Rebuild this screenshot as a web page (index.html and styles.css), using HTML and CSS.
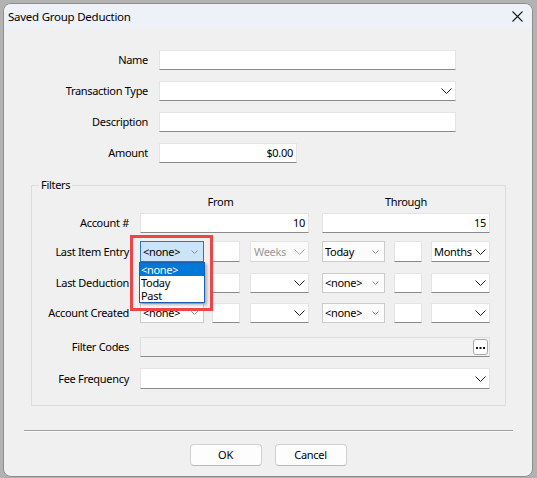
FILE: index.html
```html
<!DOCTYPE html>
<html lang="en">
<head>
<meta charset="utf-8">
<title>Saved Group Deduction</title>
<link rel="stylesheet" href="styles.css">
</head>
<body>
<div class="window">
  <div class="titlebar">
    <span class="title">Saved Group Deduction</span>
    <svg class="close" width="11" height="11" viewBox="0 0 11 11"><path d="M0.5 0.5 L10.5 10.5 M10.5 0.5 L0.5 10.5" stroke="#1a1a1a" stroke-width="1.1" fill="none"/></svg>
  </div>

  <div class="client">
    <div class="main-form">
      <label class="lbl">Name</label>
      <div class="field"></div>

      <label class="lbl">Transaction Type</label>
      <div class="field select"><span></span><svg class="chev" width="11" height="6" viewBox="0 0 11 6"><path d="M0.5 0.5 L5.5 5.5 L10.5 0.5"/></svg></div>

      <label class="lbl">Description</label>
      <div class="field"></div>

      <label class="lbl">Amount</label>
      <div class="field num amount">$0.00</div>
    </div>

    <fieldset class="filters">
      <legend>Filters</legend>

      <div class="frow head">
        <span></span>
        <span class="colhead from-head">From</span>
        <span class="colhead through">Through</span>
      </div>

      <div class="frow r-account">
        <label class="lbl">Account #</label>
        <div class="field num">10</div>
        <div class="field num through">15</div>
      </div>

      <div class="frow r-item">
        <label class="lbl">Last Item Entry</label>
        <div class="range from">
          <div class="combo-wrap">
            <div class="combo active"><span>&lt;none&gt;</span><svg class="chev-s" width="7" height="4" viewBox="0 0 7 4"><path d="M0.5 0.5 L3.5 3.5 L6.5 0.5"/></svg></div>
            <div class="dropdown">
              <div class="opt sel">&lt;none&gt;</div>
              <div class="opt">Today</div>
              <div class="opt">Past</div>
            </div>
            <div class="callout"></div>
          </div>
          <div class="field small"></div>
          <div class="field select disabled"><span>Weeks</span><svg class="chev" width="11" height="6" viewBox="0 0 11 6"><path d="M0.5 0.5 L5.5 5.5 L10.5 0.5"/></svg></div>
        </div>
        <div class="range to through">
          <div class="combo"><span>Today</span><svg class="chev-s" width="7" height="4" viewBox="0 0 7 4"><path d="M0.5 0.5 L3.5 3.5 L6.5 0.5"/></svg></div>
          <div class="field small"></div>
          <div class="field select"><span>Months</span><svg class="chev" width="11" height="6" viewBox="0 0 11 6"><path d="M0.5 0.5 L5.5 5.5 L10.5 0.5"/></svg></div>
        </div>
      </div>

      <div class="frow r-ded">
        <label class="lbl">Last Deduction</label>
        <div class="range from">
          <!-- this combo sits under the open list above -->
          <div class="combo"><span></span><svg class="chev-s" width="7" height="4" viewBox="0 0 7 4"><path d="M0.5 0.5 L3.5 3.5 L6.5 0.5"/></svg></div>
          <div class="field small"></div>
          <div class="field select"><span></span><svg class="chev" width="11" height="6" viewBox="0 0 11 6"><path d="M0.5 0.5 L5.5 5.5 L10.5 0.5"/></svg></div>
        </div>
        <div class="range to through">
          <div class="combo"><span>&lt;none&gt;</span><svg class="chev-s" width="7" height="4" viewBox="0 0 7 4"><path d="M0.5 0.5 L3.5 3.5 L6.5 0.5"/></svg></div>
          <div class="field small"></div>
          <div class="field select"><span></span><svg class="chev" width="11" height="6" viewBox="0 0 11 6"><path d="M0.5 0.5 L5.5 5.5 L10.5 0.5"/></svg></div>
        </div>
      </div>

      <div class="frow r-created">
        <label class="lbl">Account Created</label>
        <div class="range from">
          <div class="combo"><span>&lt;none&gt;</span><svg class="chev-s" width="7" height="4" viewBox="0 0 7 4"><path d="M0.5 0.5 L3.5 3.5 L6.5 0.5"/></svg></div>
          <div class="field small"></div>
          <div class="field select"><span></span><svg class="chev" width="11" height="6" viewBox="0 0 11 6"><path d="M0.5 0.5 L5.5 5.5 L10.5 0.5"/></svg></div>
        </div>
        <div class="range to through">
          <div class="combo"><span>&lt;none&gt;</span><svg class="chev-s" width="7" height="4" viewBox="0 0 7 4"><path d="M0.5 0.5 L3.5 3.5 L6.5 0.5"/></svg></div>
          <div class="field small"></div>
          <div class="field select"><span></span><svg class="chev" width="11" height="6" viewBox="0 0 11 6"><path d="M0.5 0.5 L5.5 5.5 L10.5 0.5"/></svg></div>
        </div>
      </div>

      <div class="frow r-codes">
        <label class="lbl">Filter Codes</label>
        <div class="picker">
          <div class="ellipsis"><svg width="9" height="2" viewBox="0 0 9 2"><rect x="0" y="0" width="2" height="2"/><rect x="3.5" y="0" width="2" height="2"/><rect x="7" y="0" width="2" height="2"/></svg></div>
        </div>
      </div>

      <div class="frow r-fee">
        <label class="lbl">Fee Frequency</label>
        <div class="field select span"><span></span><svg class="chev" width="11" height="6" viewBox="0 0 11 6"><path d="M0.5 0.5 L5.5 5.5 L10.5 0.5"/></svg></div>
      </div>
    </fieldset>

    <div class="separator"></div>

    <div class="buttons">
      <button class="btn">OK</button>
      <button class="btn">Cancel</button>
    </div>
  </div>
</div>
</body>
</html>
```

FILE: styles.css
```css
* {
  box-sizing: border-box;
}

html,
body {
  margin: 0;
}

body {
  width: 537px;
  height: 478px;
  overflow: hidden;
  background: #b2b2b2;
  font-family: "Noto Sans", "Open Sans", sans-serif;
  font-size: 11px;
  letter-spacing: -0.3px;
  color: #000;
}

/* dialog frame */
.window {
  margin: 3px 0 0 3px;
  width: 530px;
  height: 474px;
  border: 1px solid #8e8e8e;
  border-radius: 8px;
  overflow: hidden;
  background: #f0f0f0;
  display: flex;
  flex-direction: column;
}

.titlebar {
  flex: none;
  height: 24px;
  background: #eef2f8;
  display: flex;
  align-items: center;
  justify-content: space-between;
  padding: 0 9px 0 4px;
}

.title {
  font-size: 11.5px;
  letter-spacing: -0.25px;
  line-height: 16px;
  padding-top: 1px;
}

.close {
  display: block;
  margin-top: 1px;
}

.client {
  flex: 1;
  padding-top: 22px;
}

/* upper form */
.main-form {
  display: grid;
  grid-template-columns: 144px 297px;
  grid-auto-rows: 20px;
  column-gap: 11px;
  row-gap: 11px;
  align-items: center;
}

.lbl {
  text-align: right;
  line-height: 16px;
  white-space: nowrap;
}

/* text box */
.field {
  height: 20px;
  background: #fff;
  border: 1px solid #e4e4e4;
  border-bottom-color: #8a8a8a;
  display: flex;
  align-items: center;
  line-height: 16px;
  white-space: nowrap;
}

.num {
  justify-content: flex-end;
  padding-right: 3px;
}

.amount {
  width: 138px;
}

/* flat drop-down list */
.select {
  justify-content: space-between;
  padding: 0 3px 0 2px;
}

.chev path {
  fill: none;
  stroke: #1a1a1a;
  stroke-width: 1;
}

.chev,
.chev-s {
  display: block;
  flex: none;
}

.select.disabled {
  background: #fbfbfb;
  border-color: #e4e4e4;
  border-bottom-color: #d6d6d6;
  color: #9a9a9a;
}

.select.disabled span {
  padding-left: 1px;
}

.select.disabled .chev path {
  stroke: #a6a6a6;
}

/* filters group */
.filters {
  margin: 14px 0 0 27px;
  width: 475px;
  min-width: 0;
  border: 1px solid #dcdcdc;
  padding: 0 0 16px 0;
}

.filters legend {
  margin-left: 7px;
  padding: 0 2px;
  line-height: 16px;
}

.frow {
  display: grid;
  grid-template-columns: 97px 169px 170px;
  column-gap: 11px;
  align-items: center;
  height: 20px;
}

.through {
  margin-left: 2px;
}

.frow.head {
  height: 14px;
  margin-top: 2px;
  line-height: 14px;
}

.colhead {
  text-align: center;
}

.from-head {
  padding-right: 8px;
}

.r-account {
  margin-top: 4px;
}

.r-item {
  margin-top: 8px;
  height: 21px;
}

.r-ded {
  margin-top: 11px;
}

.r-created {
  margin-top: 10px;
}

.r-codes {
  margin-top: 14px;
}

.r-fee {
  margin-top: 11px;
  height: 21px;
}

.r-item .field,
.r-item .combo,
.r-fee .field {
  height: 21px;
}

/* from / through clusters */
.range {
  display: flex;
  align-items: center;
  height: 100%;
}

.range.from > :nth-child(1) {
  width: 64px;
  flex: none;
}

.range.from > :nth-child(2) {
  margin-left: 8px;
}

.range.from > :nth-child(3) {
  margin-left: 10px;
}

.range.to > :nth-child(1) {
  width: 63px;
  flex: none;
}

.range.to > :nth-child(2) {
  margin-left: 9px;
}

.range.to > :nth-child(3) {
  margin-left: 9px;
}

.field.small {
  width: 28px;
  flex: none;
}

.range .select {
  width: 59px;
  flex: none;
}

/* combo box with border all round */
.combo {
  height: 20px;
  background: #fcfcfc;
  border: 1px solid #cccccc;
  display: flex;
  align-items: center;
  justify-content: space-between;
  padding: 0 5px 0 2px;
  line-height: 16px;
  white-space: nowrap;
}

.chev-s path {
  fill: none;
  stroke: #8a8a8a;
  stroke-width: 1;
}

.combo-wrap {
  position: relative;
  height: 21px;
}

.combo-wrap .combo {
  height: 21px;
}

.combo.active {
  background: #cce4f7;
  border-color: #2f74c0;
}

/* open list of the focused combo */
.dropdown {
  position: absolute;
  top: 21px;
  left: -1px;
  width: 66px;
  z-index: 2;
  background: #fff;
  border: 1px solid #1f5ea8;
  box-shadow: 2px 2px 3px rgba(0, 0, 0, 0.28);
}

.opt {
  height: 13px;
  line-height: 13px;
  padding-left: 1px;
}

.opt.sel {
  background: #0078d7;
  color: #fff;
}

/* red marker around the open list */
.callout {
  position: absolute;
  left: -10px;
  top: -6px;
  width: 83px;
  height: 76px;
  border: 3px solid #ee4646;
  z-index: 3;
  pointer-events: none;
}

/* read-only picker with browse button */
.picker {
  grid-column: 2 / 4;
  height: 20px;
  background: #f2f2f2;
  border: 1px solid #dedede;
  border-bottom-color: #8a8a8a;
  display: flex;
  align-items: center;
  justify-content: flex-end;
  padding-right: 1px;
}

.ellipsis {
  width: 15px;
  height: 16px;
  background: #fff;
  border: 1px solid #a8a8a8;
  border-radius: 3px;
  display: flex;
  align-items: flex-end;
  justify-content: center;
  padding-bottom: 5px;
}

.ellipsis svg {
  display: block;
  fill: #111;
}

.field.span {
  grid-column: 2 / 4;
}

/* footer */
.separator {
  margin: 24px 19px 0 20px;
  border-top: 1px solid #a0a0a0;
  border-bottom: 1px solid #fafafa;
}

.buttons {
  margin-top: 12px;
  display: flex;
  justify-content: center;
  gap: 13px;
}

.btn {
  width: 72px;
  height: 22px;
  padding: 0;
  background: #fdfdfd;
  border: 1px solid #d0d0d0;
  border-bottom-color: #b9b9b9;
  border-radius: 4px;
  font-family: inherit;
  font-size: 11px;
  letter-spacing: -0.3px;
  color: #000;
  line-height: 16px;
}
```
